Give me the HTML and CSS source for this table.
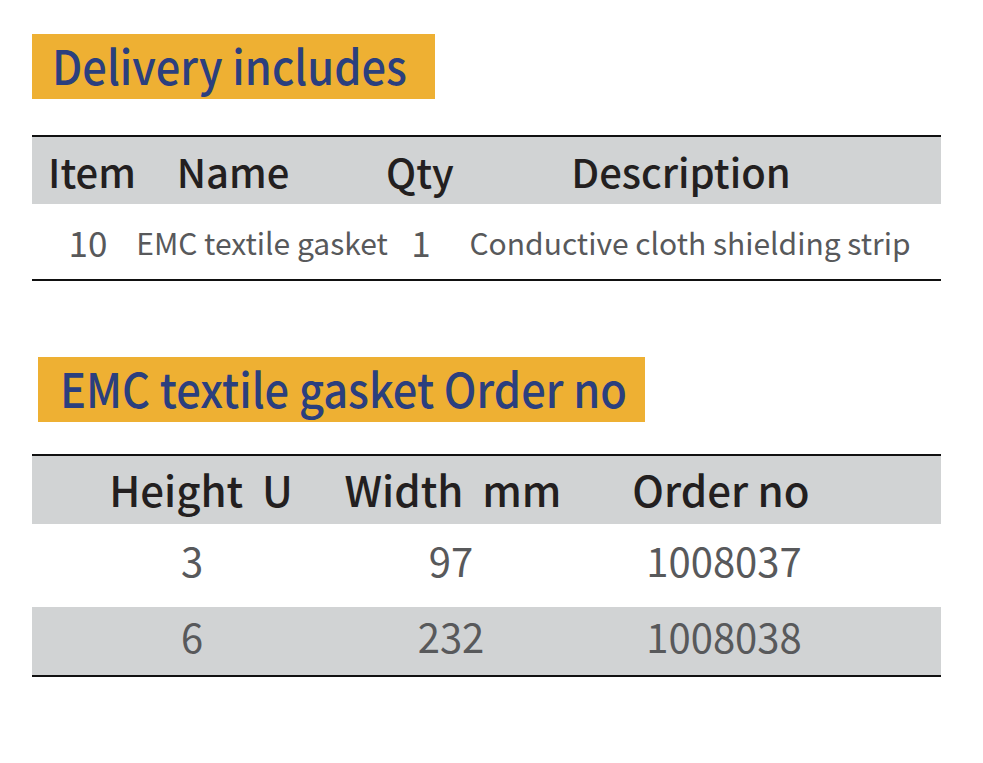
FILE: index.html
```html
<!DOCTYPE html>
<html>
<head>
<meta charset="utf-8">
<link rel="stylesheet" href="styles.css">
</head>
<body>
<div class="page">
  <div class="banner banner-one"><span class="banner-text">Delivery includes</span></div>

  <div class="table t1">
    <div class="row head">
      <div class="cell">Item</div>
      <div class="cell">Name</div>
      <div class="cell">Qty</div>
      <div class="cell">Description</div>
    </div>
    <div class="row body">
      <div class="cell num">10</div>
      <div class="cell">EMC textile gasket</div>
      <div class="cell num">1</div>
      <div class="cell">Conductive cloth shielding strip</div>
    </div>
  </div>

  <div class="banner banner-two"><span class="banner-text">EMC textile gasket Order no</span></div>

  <div class="table t2">
    <div class="row head">
      <div class="cell">Height&nbsp;&nbsp;U</div>
      <div class="cell">Width&nbsp;&nbsp;mm</div>
      <div class="cell">Order no</div>
    </div>
    <div class="row body r-white">
      <div class="cell">3</div>
      <div class="cell">97</div>
      <div class="cell">1008037</div>
    </div>
    <div class="row body r-gray">
      <div class="cell">6</div>
      <div class="cell">232</div>
      <div class="cell">1008038</div>
    </div>
  </div>
</div>
</body>
</html>
```

FILE: styles.css
```css
html, body {
  margin: 0;
  padding: 0;
  background: #ffffff;
}

body {
  font-family: "Noto Sans CJK SC", "Noto Sans", sans-serif;
}

.page {
  width: 909px;
  margin-left: 32px;
  padding-top: 34px;
  display: flex;
  flex-direction: column;
}

.banner {
  background: #eeb033;
  color: #2b3f7e;
  font-size: 43.4px;
  font-weight: 500;
  height: 65px;
  display: flex;
  align-items: center;
  padding-bottom: 6px;
  box-sizing: border-box;
  white-space: nowrap;
}

.banner-text {
  display: inline-block;
  transform: scaleY(1.1);
  transform-origin: center;
}

.banner-one {
  width: 403px;
  padding-left: 20px;
}

.banner-two {
  width: 607px;
  margin-left: 6px;
  margin-top: 76px;
  padding-left: 22px;
}

.table {
  border-top: 2px solid #111;
  border-bottom: 2px solid #111;
  margin-top: 36px;
}

.t2 {
  margin-top: 32px;
}

.row {
  display: grid;
  white-space: nowrap;
}

.cell {
  display: flex;
  justify-content: center;
  align-items: center;
}

.head {
  background: #d1d3d4;
  color: #231f20;
  font-size: 40px;
  font-weight: 500;
  height: 67px;
}

.body {
  color: #58595b;
}

/* table 1 */
.t1 .head {
  grid-template-columns: 120px 162px 212px 310px;
}
.t1 .body {
  height: 75px;
  font-size: 30px;
  grid-template-columns: 112px 236px 82px 456px;
}
.t1 .body .num {
  font-size: 35px;
}

/* table 2 */
.t2 .head {
  grid-template-columns: 338px 166px 370px;
  height: 68px;
  font-size: 42px;
}
.t2 .head .cell {
  padding-bottom: 4px;
}
.t2 .body {
  grid-template-columns: 320px 198px 348px;
  font-size: 40px;
}
.t2 .body .cell {
  padding-bottom: 12px;
}
.t2 .r-white {
  height: 83px;
  background: #ffffff;
}
.t2 .r-gray {
  height: 68px;
  background: #d1d3d4;
}
```
